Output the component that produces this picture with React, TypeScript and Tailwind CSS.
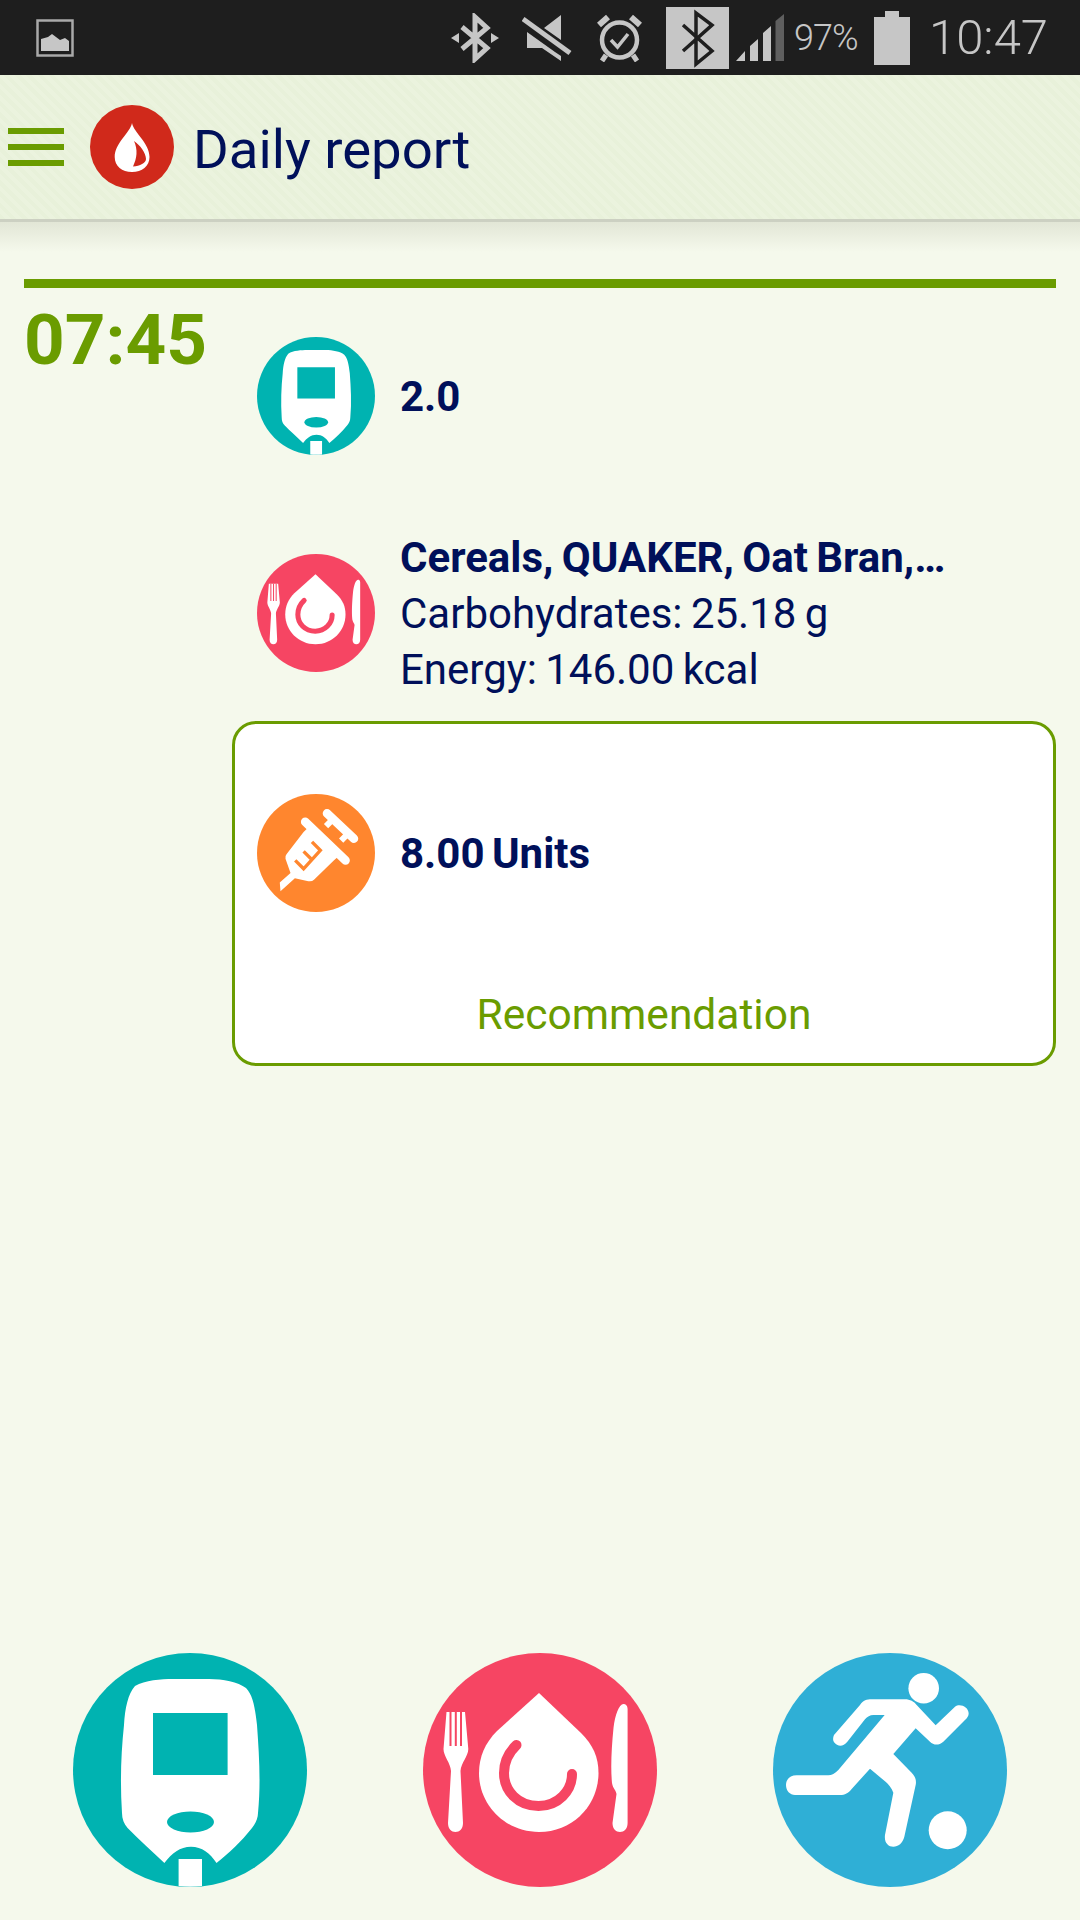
import React from "react";

const GREY = "#c6c6c6";

function ImageIcon() {
  return (
    <svg width="38" height="38" viewBox="0 0 38 38">
      <rect x="1.5" y="1.5" width="35" height="35" fill="none" stroke="#a9a9a9" strokeWidth="2.5" />
      <path d="M5 31 V20 L12 18 L16 15 L24 21 L29 19 L33 22 V32 H5 Z" fill={GREY} />
    </svg>
  );
}
function BtStar() {
  return (
    <svg width="48" height="50" viewBox="0 0 48 50" fill="none">
      <path d="M11 14 L36 35 L24 46 V4 L36 15 L11 36" stroke={GREY} strokeWidth="5" />
      <path d="M0 25 L8 20 V30 Z M48 25 L40 20 V30 Z" fill={GREY} />
    </svg>
  );
}
function Mute() {
  return (
    <svg width="50" height="48" viewBox="0 0 50 48">
      <path d="M39 1 V26 L22 14 Z M5 18 L33 38 L39 42 V47 L20 34 H5 Z" fill={GREY} />
      <path d="M1 5 L48 39" stroke={GREY} strokeWidth="5" />
    </svg>
  );
}
function Alarm() {
  return (
    <svg width="50" height="48" viewBox="0 0 50 48" fill="none" stroke={GREY}>
      <circle cx="24.5" cy="26" r="17.5" strokeWidth="4.5" />
      <path d="M4 11 L13 3 M45 11 L36 3" strokeWidth="6" />
      <path d="M11 41 L7 47 M38 41 L42 47" strokeWidth="5" />
      <path d="M16 26 L22.5 33 L33 20" strokeWidth="3.5" />
    </svg>
  );
}
function BtBox() {
  return (
    <svg width="63" height="62" viewBox="0 0 63 62" fill="none">
      <rect width="63" height="62" fill={GREY} />
      <path d="M17 18 L46 44 L30 57 V6 L46 18 L17 44" stroke="#1e1e1e" strokeWidth="3.5" />
    </svg>
  );
}
function Signal() {
  return (
    <svg width="48" height="48" viewBox="0 0 48 48">
      <path d="M0 48 L9 38 V48 Z M14 33 L22 26 V48 H14 Z M27 20 L35 13 V48 H27 Z" fill={GREY} />
      <path d="M39.5 8 L48 1 V48 H39.5 Z" fill="#5f5f5f" />
    </svg>
  );
}
function Battery() {
  return (
    <svg width="36" height="54" viewBox="0 0 36 54">
      <path d="M11 0 H25 V6 H36 V54 H0 V6 H11 Z" fill={GREY} />
    </svg>
  );
}
function Drop() {
  return (
    <svg viewBox="0 0 84 84" className="w-[84px] h-[84px] shrink-0">
      <circle cx="42" cy="42" r="42" fill="#d0291b" />
      <path d="M42 18 C44 28 59.5 38 59.5 52 C59.5 61 52 67 42 67 C32 67 24.7 61 24.7 52 C24.7 38 40 28 42 18 Z" fill="#fff" />
      <path d="M44 36 C50 40 56 48 56 54 C56 58 50 61 43 61.5 C47 53 48 45 44 36 Z" fill="#d0291b" />
    </svg>
  );
}
function Meter({ className }: { className: string }) {
  return (
    <svg viewBox="0 0 234 234" className={className}>
      <circle cx="117" cy="117" r="117" fill="#00b3b1" />
      <path
        d="M62 33 C72 27 88 26 100 26 H136 C150 26 165 29 173 35 C180 42 182 55 184 72 C186 100 188 130 185 160 C185 166 182 171 179 175 C168 189 156 200 143.5 210 C137 200 129 193.7 118 193.7 C107 193.7 99 200 91.4 210 C79 198 66 187 54.6 175 C51 171 49 166 49 160 C47 130 48 100 51 72 C52 55 55 41 62 33 Z"
        fill="#fff"
      />
      <rect x="80" y="60" width="74.6" height="62" fill="#00b3b1" />
      <ellipse cx="117.5" cy="169" rx="23.5" ry="10.5" fill="#00b3b1" />
      <path d="M105.6 206 H129 V233 Q117 234.5 105.6 233 Z" fill="#fff" />
    </svg>
  );
}
function Food({ className }: { className: string }) {
  return (
    <svg viewBox="0 0 234 234" className={className}>
      <circle cx="117" cy="117" r="117" fill="#f64563" />
      <path
        d="M116 40 L158 80 C170 92 175.5 104 175.5 120 C175.5 152 150 179 116 179 C82 179 56 152 56 120 C56 104 62 90 74 78 Z"
        fill="#fff"
      />
      <path d="M93.5 92 C84 101 81 110 81 120 C81 138 95 153 115.5 153 C135 153 149 138 149 121" fill="none" stroke="#f64563" strokeWidth="10" strokeLinecap="round" />
      <path
        d="M23.5 59 H42 L45.3 96 C45.3 103 38 110 37.5 118 L40 170 C40 176 36.5 179 32.5 179 C28.5 179 25 176 25 170 L28 118 C27.5 110 20.5 103 20.5 96 Z"
        fill="#fff"
      />
      <path d="M27.5 59 V93 M32.8 59 V93 M38 59 V93" stroke="#f64563" strokeWidth="2" />
      <path
        d="M204.6 56 C204.6 52 202 51 200.5 51 C196 51 192 62 190.5 75 C188.5 95 187.5 115 189 130 C190 136 193 137 193.5 141 L189.5 170 C189.5 176 193 179 197 179 C201 179 204.6 176 204.6 170 Z"
        fill="#fff"
      />
    </svg>
  );
}
function Soccer({ className }: { className: string }) {
  return (
    <svg viewBox="0 0 234 234" className={className}>
      <circle cx="117" cy="117" r="117" fill="#2fafd6" />
      <circle cx="150.7" cy="35.3" r="15.3" fill="#fff" />
      <circle cx="174.7" cy="177.3" r="19" fill="#fff" />
      <g transform="translate(-13,-13) scale(0.33333)">
        <path
          d="M222 285 L300 195 C310 180 320 178 335 178 L435 178 C450 178 462 185 470 195 L527 256 L585 200 C600 190 625 200 626 220 C626 228 622 234 615 240 L550 305 C535 318 520 315 510 305 L467 265 L400 342 L455 398 C465 408 470 420 467 435 L433 590 C428 610 415 620 400 620 C385 620 372 608 375 585 L400 458 C395 445 385 432 375 424 L330 386 L275 447 C265 460 255 465 240 465 L105 465 C90 465 78 452 78 435 C78 418 90 406 110 406 L205 406 C215 406 225 400 235 390 L374 225 L340 225 C330 225 322 230 315 238 L262 305 C250 320 235 320 225 310 C218 303 218 295 222 285 Z"
          fill="#fff"
        />
      </g>
    </svg>
  );
}
function Syringe({ className }: { className: string }) {
  return (
    <svg viewBox="52 42 352 352" className={className}>
      <circle cx="228" cy="218" r="176" fill="#ff862e" />
      <path d="M196 125 L316 240 M261 100 L341 175" stroke="#fff" strokeWidth="26" strokeLinecap="round" />
      <path d="M278 118 L258 138 M322 162 L303 181" stroke="#fff" strokeWidth="18" />
      <path d="M191 155 L212 135 L302 222 L281 240 L222 298 Q215 304 205 302 L165 293 L122 332 L120 306 L152 278 L137 235 Q135 228 140 222 Z" fill="#fff" />
      <path d="M216 185 L241 210 L191 265 L166 240 M216 238 L191 213" fill="none" stroke="#ff862e" strokeWidth="10" />
    </svg>
  );
}

export default function App() {
  const navy = "text-[#00105a]";
  return (
    <div className="w-[1080px] h-[1920px] flex flex-col bg-[#f5f9ec] overflow-hidden font-['Roboto',sans-serif]">
      <div className="h-[75px] shrink-0 bg-[#1e1e1e] flex items-center pl-[36px]">
        <ImageIcon />
        <div className="ml-[377px]"><BtStar /></div>
        <div className="ml-[23px]"><Mute /></div>
        <div className="ml-[23px]"><Alarm /></div>
        <div className="ml-[21px]"><BtBox /></div>
        <div className="ml-[7px] mt-[-2px]"><Signal /></div>
        <span className="ml-[10px] w-[68px] text-[36px] leading-none font-light text-[#c6c6c6] whitespace-nowrap tracking-[-1px]">97%</span>
        <div className="ml-[12px]"><Battery /></div>
        <span className="ml-[19px] text-[49px] leading-none font-light text-[#c6c6c6]">10:47</span>
      </div>

      <div className="h-[144px] shrink-0 flex items-center pl-[8px] bg-[#e8f1da] bg-[repeating-linear-gradient(45deg,#e8f1da_0px,#e8f1da_4px,#ebf3de_4px,#ebf3de_8px)]">
        <div className="w-[56px] flex flex-col gap-[10px]">
          <div className="h-[6px] bg-[#6a9c00]" />
          <div className="h-[6px] bg-[#6a9c00]" />
          <div className="h-[6px] bg-[#6a9c00]" />
        </div>
        <div className="ml-[26px]"><Drop /></div>
        <h1 className={`ml-[19px] pt-[5px] text-[54.5px] leading-none font-normal ${navy}`}>Daily report</h1>
      </div>
      <div className="h-[3px] shrink-0 bg-[#ccd0c2]" />
      <div className="h-[30px] shrink-0 bg-gradient-to-b from-[#e2e6d6] to-[#f5f9ec]" />

      <div className="flex-1 px-[24px] pt-[27px]">
        <div className="h-[9px] bg-[#6a9c00]" />
        <div className="flex">
          <div className="w-[208px] shrink-0 pt-[12px] font-bold text-[71px] leading-[80px] text-[#6a9c00]">07:45</div>
          <div className="flex-1 flex flex-col">
            <div className="flex items-center pl-[25px] mt-[49px]">
              <Meter className="w-[118px] h-[118px] shrink-0" />
              <span className={`ml-[25px] pt-[2px] text-[42px] font-bold leading-[56px] ${navy}`}>2.0</span>
            </div>
            <div className="flex items-center pl-[25px] mt-[73px]">
              <Food className="w-[118px] h-[118px] shrink-0" />
              <div className={`ml-[25px] pt-[2px] text-[42px] leading-[56px] [word-spacing:-2px] ${navy}`}>
                <div className="font-bold">Cereals, QUAKER, Oat Bran,…</div>
                <div>Carbohydrates: 25.18 g</div>
                <div>Energy: 146.00 kcal</div>
              </div>
            </div>
            <div className="mt-[23px] h-[345px] rounded-[24px] border-[3px] border-[#6a9c00] bg-white flex flex-col">
              <div className="flex items-center pl-[22px] pt-[70px]">
                <Syringe className="w-[118px] h-[118px] shrink-0" />
                <span className={`ml-[25px] pt-[2px] text-[42px] font-bold leading-[56px] [word-spacing:-3px] ${navy}`}>8.00 Units</span>
              </div>
              <div className="mt-auto pb-[20px] text-center text-[42.5px] leading-[56px] text-[#6a9c00]">Recommendation</div>
            </div>
          </div>
        </div>
      </div>

      <div className="shrink-0 flex justify-between px-[73px] pb-[33px]">
        <Meter className="w-[234px] h-[234px]" />
        <Food className="w-[234px] h-[234px]" />
        <Soccer className="w-[234px] h-[234px]" />
      </div>
    </div>
  );
}
